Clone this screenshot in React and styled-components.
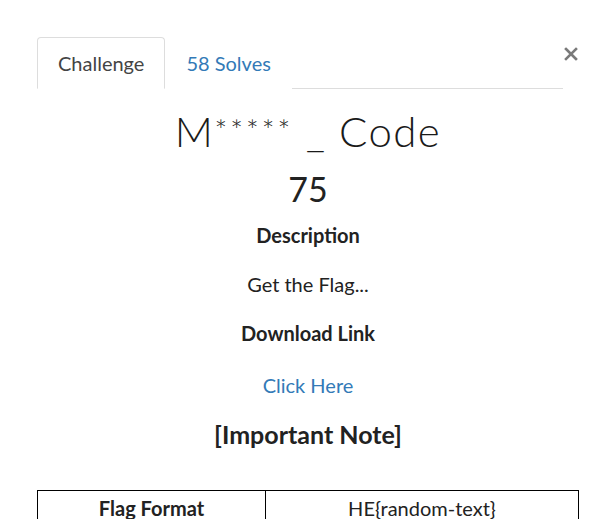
import React from 'react';
import styled, { createGlobalStyle } from 'styled-components';

const GlobalStyle = createGlobalStyle`
  html, body {
    margin: 0;
    padding: 0;
    background: #fff;
    font-family: Lato, "Liberation Sans", sans-serif;
    color: #222;
  }
`;

const Modal = styled.div`
  width: 613px;
  height: 519px;
  overflow: hidden;
  box-sizing: border-box;
  padding: 37px 34px 0 37px;
`;

const Header = styled.div`
  display: flex;
  align-items: flex-start;
`;

const TabList = styled.ul`
  flex: 1;
  display: flex;
  margin: 0;
  padding: 0;
  list-style: none;
  border-bottom: 1px solid #ddd;
`;

const Tab = styled.li`
  height: 50px;
  margin-bottom: -1px;
  padding: 0 20px;
  display: flex;
  align-items: center;
  font-size: 20px;
  color: ${(props) => (props.active ? '#444' : '#337ab7')};
  background: #fff;
  border: 1px solid ${(props) => (props.active ? '#ddd' : 'transparent')};
  border-bottom-color: ${(props) => (props.active ? '#fff' : 'transparent')};
  border-radius: 4px 4px 0 0;
  cursor: pointer;
`;

const CloseButton = styled.button`
  width: 16px;
  height: 16px;
  margin-top: 9px;
  padding: 0;
  border: 0;
  background: transparent;
  display: flex;
  align-items: center;
  justify-content: center;
  cursor: pointer;
`;

const Body = styled.div`
  text-align: center;
`;

const Title = styled.h1`
  margin: 17px 0 0;
  font-size: 42px;
  line-height: 50px;
  font-weight: 300;
  letter-spacing: 1.4px;
  color: #1a1a1a;
`;

const Stars = styled.span`
  font-size: 30px;
  line-height: 0;
  vertical-align: 6px;
  letter-spacing: 3px;
`;

const Points = styled.h2`
  margin: 11px 0 0;
  font-size: 34px;
  line-height: 44px;
  font-weight: 400;
  color: #222;
`;

const Label = styled.p`
  margin: ${(props) => props.gap}px 0 0;
  font-size: ${(props) => props.size || 20}px;
  line-height: ${(props) => (props.size ? props.size + 4 : 24)}px;
  font-weight: 700;
  color: #222;
`;

const Text = styled.p`
  margin: ${(props) => props.gap}px 0 0;
  font-size: 20px;
  line-height: 24px;
  color: #222;
`;

const Link = styled.a`
  color: #337ab7;
  text-decoration: none;
`;

const Table = styled.table`
  width: 100%;
  margin-top: 41px;
  border-collapse: collapse;
  font-size: 20px;
`;

const Cell = styled.td`
  width: ${(props) => props.w || 'auto'};
  border: 1px solid #000;
  padding: 5px 8px;
  text-align: center;
  font-weight: ${(props) => (props.bold ? 700 : 400)};
  color: #222;
`;

export default function App() {
  return (
    <Modal>
      <GlobalStyle />
      <Header>
        <TabList>
          <Tab active>Challenge</Tab>
          <Tab>58 Solves</Tab>
        </TabList>
        <CloseButton aria-label="close">
          <svg width="14" height="14" viewBox="0 0 14 14">
            <path d="M2 2 L12 12 M12 2 L2 12" stroke="#7a7a7a" strokeWidth="2.6" strokeLinecap="square" />
          </svg>
        </CloseButton>
      </Header>

      <Body>
        <Title>M<Stars>*****</Stars> _ Code</Title>
        <Points>75</Points>
        <Label gap={12}>Description</Label>
        <Text gap={25}>Get the Flag...</Text>
        <Label gap={25}>Download Link</Label>
        <Text gap={28}>
          <Link href="#">Click Here</Link>
        </Text>
        <Label gap={23} size={25}>[Important Note]</Label>
        <Table>
          <tbody>
            <tr>
              <Cell bold w="211px">Flag Format</Cell>
              <Cell>HE{'{'}random-text{'}'}</Cell>
            </tr>
          </tbody>
        </Table>
      </Body>
    </Modal>
  );
}
